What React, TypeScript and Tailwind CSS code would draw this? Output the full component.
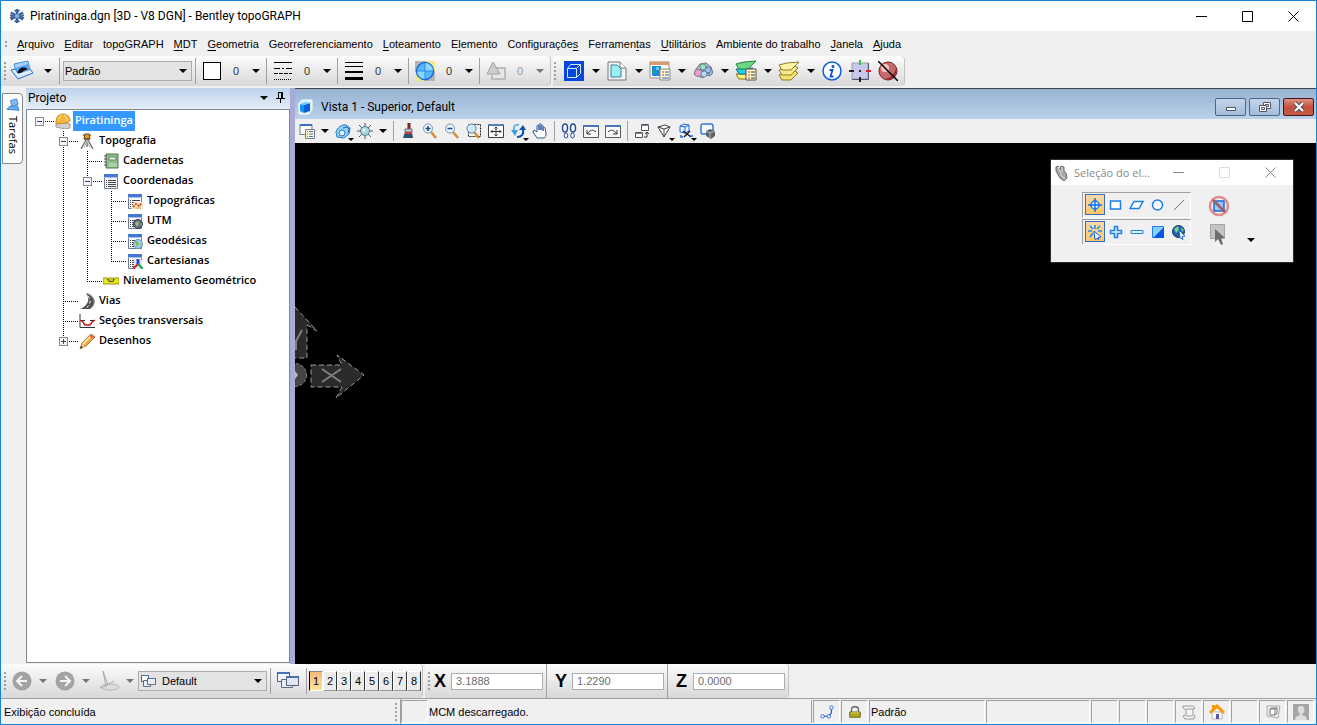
import { useState, type ReactNode } from 'react';

type IconProps = { children: ReactNode; box?: number; className?: string };

function Svg({ children, box = 16, className = 'h-4 w-4' }: IconProps) {
  return (
    <svg viewBox={`0 0 ${box} ${box}`} className={`shrink-0 ${className}`} fill="none" aria-hidden="true">
      {children}
    </svg>
  );
}

function Caret({ muted = false }: { muted?: boolean }) {
  return (
    <svg viewBox="0 0 8 4" className={muted ? 'h-1 w-2 shrink-0 text-[#777]' : 'h-1 w-2 shrink-0 text-black'} aria-hidden="true">
      <path d="M0 0h8L4 4z" fill="currentColor" />
    </svg>
  );
}

function Grip() {
  return (
    <svg viewBox="0 0 2 18" className="h-[18px] w-0.5 shrink-0" aria-hidden="true">
      <path d="M1 0v18" stroke="#a0a0a0" strokeWidth="2" strokeDasharray="2 2" />
    </svg>
  );
}

/* ---------- icons ---------- */

const Snowflake = () => (
  <Svg box={16} className="h-4 w-4">
    <g stroke="#3a649a" strokeWidth="2.500">
      <path d="M8 1v14M1.900 4.500l12.200 7M1.900 11.500l12.200-7" />
      <path d="M5.500 2L8 4.500 10.500 2M5.500 14L8 11.500l2.500 2.500M1 7l3.500 1L1 10M15 7l-3.500 1L15 10" strokeWidth="1.500" />
    </g>
    <circle cx="8" cy="8" r="2" fill="#8eb4dc" />
  </Svg>
);

const TaskTool = () => (
  <Svg box={24} className="h-6 w-6">
    <path d="M4 5l14-3 2 9-13 4z" fill="#a7d3fa" stroke="#4c8ed8" />
    <path d="M1 11l7 9 15-6-3-4-12 4-3-4z" fill="#dcecff" stroke="#2467dc" />
    <path d="M5 9l13-4 2 6-12 4z" fill="#5ba4f2" />
    <path d="M7 14c2-6 8-8 11-3-4-1-5 3-8 3z" fill="#111" />
  </Svg>
);

const LineStyle = () => (
  <Svg box={20} className="h-5 w-5">
    <path d="M1 1.500h18" stroke="#000" />
    <path d="M1 7.500h18" stroke="#000" strokeDasharray="6 2 2 2" />
    <path d="M1 12.500h18" stroke="#000" strokeDasharray="4 1" />
    <path d="M1 18.500h18" stroke="#000" strokeDasharray="1 1" />
  </Svg>
);

const LineWeight = () => (
  <Svg box={20} className="h-5 w-5">
    <path d="M1 1.500h18M1 5.500h18" stroke="#000" />
    <path d="M1 11h18" stroke="#000" strokeWidth="2" />
    <path d="M1 17.500h18" stroke="#000" strokeWidth="3" />
  </Svg>
);

const Transparency = () => (
  <Svg box={20} className="h-5 w-5">
    <path d="M0 0h20v20H0z" fill="#b6b6b6" />
    <path d="M11 0h9v10h-9zM0 11h9v9H0z" fill="#f4e88c" />
    <circle cx="10" cy="10" r="8.500" fill="#58b7fb" stroke="#1668d8" strokeWidth="1.500" />
    <path d="M10 2a8 8 0 0 1 8 8h-8zM10 18a8 8 0 0 1-8-8h8z" fill="#8bd5ff" />
    <path d="M10 2v16M2 10h16" stroke="#2f8de6" />
  </Svg>
);

const Priority = () => (
  <Svg box={20} className="h-5 w-5">
    <path d="M8 7h11v11H6v-4" fill="#e6e6e6" stroke="#b0b0b0" strokeWidth="1.500" />
    <path d="M7 1L1 13h13z" fill="#ccc" stroke="#a2a2a2" />
  </Svg>
);

const Models = () => (
  <Svg box={20} className="h-5 w-5">
    <path d="M0 0h20v20H0z" fill="#0546dc" />
    <path d="M3.500 7.500h9v9h-9zM3.500 7.500l3-4h10l-4 4M16.500 3.500v9l-4 4" stroke="#d7eaff" />
  </Svg>
);

const References = () => (
  <Svg box={20} className="h-5 w-5">
    <path d="M1 1h12l6 6v12H1z" fill="#f3f3fa" stroke="#777" />
    <path d="M4 4h6l4 4v8H4z" fill="#9af0f5" stroke="#3c7f94" />
    <path d="M13 1v6h6" fill="#fff" stroke="#777" />
  </Svg>
);

const Raster = () => (
  <Svg box={22} className="h-[22px] w-[22px]">
    <path d="M1 2h19v16H1z" fill="#fff" stroke="#9a8b80" />
    <path d="M1 2h19v3H1z" fill="#d79d70" />
    <path d="M3 6h9v10H3z" fill="#198bd6" />
    <path d="M4 10h3v3H4z" fill="#20a868" />
    <path d="M7 7h3v3H7z" fill="#63cdf3" />
    <path d="M11 9h10v11H11z" fill="#fffbc8" stroke="#888" />
    <path d="M13 12h2M13 15h2" stroke="#d12c2c" />
    <path d="M16 12h4M16 15h4M13 18h7" stroke="#2b5dd1" />
  </Svg>
);

const PointCloud = () => (
  <Svg box={20} className="h-5 w-5">
    <path d="M3 8l4-5 6-1 5 4 2 6-3 3-4-1-3 3-5-2-4-2z" fill="#a3bfd8" stroke="#6e7288" />
    <circle cx="5" cy="12" r="3.500" fill="#eca4cb" stroke="#9a6c92" />
    <circle cx="10" cy="6" r="3" fill="#a1e0c7" stroke="#66937f" />
    <circle cx="15" cy="9" r="3" fill="#9dc0ef" stroke="#5f7ba8" />
    <circle cx="11" cy="13" r="3" fill="#b5d9f2" stroke="#6b8ca6" />
    <path d="M7 8l4 2M13 5l2 2M14 12l3 1" stroke="#66718a" />
  </Svg>
);

const LevelManager = () => (
  <Svg box={22} className="h-[22px] w-[22px]">
    <path d="M1 14l3 5h9l5-5z" fill="#fff17c" stroke="#806f26" />
    <path d="M1 9l3 5h9l5-6z" fill="#1fd0ec" stroke="#216b7c" />
    <path d="M1 4l3 5h9l8-8-12 1z" fill="#69da84" stroke="#2d7c42" />
    <path d="M11 9h10v11H11z" fill="#fffbc8" stroke="#555" />
    <path d="M13 12h2M13 15h2M13 18h2" stroke="#d12c2c" />
    <path d="M16 12h4M16 15h4M16 18h4" stroke="#333" />
  </Svg>
);

const LevelDisplay = () => (
  <Svg box={22} className="h-[22px] w-[22px]">
    <path d="M1 15l3 5h9l7-7-3-2z" fill="#f6e173" stroke="#8d7a2d" />
    <path d="M1 10l3 5h9l7-7-3-2z" fill="#f8e987" stroke="#8d7a2d" />
    <path d="M1 5l3 5h9l8-8-12 1z" fill="#fdf3a8" stroke="#8d7a2d" />
  </Svg>
);

const Info = () => (
  <Svg box={20} className="h-5 w-5">
    <circle cx="10" cy="10" r="9" fill="#fff" stroke="#0d5fe0" strokeWidth="1.500" />
    <circle cx="11" cy="5.500" r="1.500" fill="#0b55d8" />
    <path d="M7.500 9h3l-2 6.500h3" stroke="#0b55d8" strokeWidth="1.800" />
  </Svg>
);

const AccuSnap = () => (
  <Svg box={22} className="h-[22px] w-[22px]">
    <path d="M3 3h16v16H3z" fill="#c8c8ec" stroke="#9b9bb5" />
    <path d="M3 19.500h16.500V3" stroke="#55556a" />
    <path d="M11 0v5" stroke="#22cf3a" strokeWidth="2" />
    <path d="M17 11h5" stroke="#e51f1f" strokeWidth="2" />
    <path d="M0 11h5M11 17v5M10 11h2" stroke="#222" strokeWidth="2" />
  </Svg>
);

const NoRedSphere = () => (
  <Svg box={20} className="h-5 w-5">
    <circle cx="10" cy="10" r="9" fill="#c4696c" stroke="#7c1d20" />
    <circle cx="7" cy="7" r="4" fill="#f0c2c2" />
    <path d="M18 7a9 9 0 0 1-11 11c6-1 10-5 11-11z" fill="#8d2024" />
    <path d="M0 0l20 20" stroke="#000" strokeWidth="1.500" />
  </Svg>
);

const Hat = () => (
  <Svg>
    <path d="M1 11l2-2 12 2v4l-5 1-9-2z" fill="#d0d0d0" stroke="#999" />
    <path d="M1 9c0-5 3-8 7-8s7 3 7 7l-4 2-10 1z" fill="#f2b53a" stroke="#c98e28" />
    <path d="M4 8c0-4 1-5 3-6M9 2c2 1 3 3 3 6" stroke="#ffe59b" />
  </Svg>
);

const Tripod = () => (
  <Svg>
    <path d="M6 1h4l1 5H5z" fill="#e59a2b" stroke="#764812" />
    <path d="M4 2h2M10 2h2M5 6h6" stroke="#55351a" />
    <path d="M7 7L2 16M8 7v7M9 7l5 9" stroke="#777" strokeWidth="1.500" />
    <path d="M8 7L5 15M8 7l3 8" stroke="#bbb" />
  </Svg>
);

const Notebook = () => (
  <Svg>
    <path d="M3 1h12v14H3z" fill="#8fbb8d" stroke="#4c7950" />
    <path d="M6 4h7v3H6z" fill="#e7f3e4" stroke="#608c62" />
    <path d="M1 3h3M1 6h3M1 9h3M1 12h3" stroke="#555" />
    <path d="M6 10h8v4H6z" fill="#a9d0a5" />
  </Svg>
);

function ListIcon({ children }: { children?: ReactNode }) {
  return (
    <Svg>
      <path d="M1.500 1.500h13v14h-13z" fill="#f5f7fb" stroke="#6f7c98" />
      <path d="M1 1h14v3H1z" fill="#4277d4" />
      <path d="M1 4.500h14" stroke="#a7c1ef" />
      <path d="M3 7.500h1M3 9.500h1M3 11.500h1M3 13.500h1M5 7.500h8M5 9.500h8M5 11.500h8M5 13.500h8" stroke="#444" />
      {children}
    </Svg>
  );
}

const Topographic = () => (
  <ListIcon>
    <path d="M7 9h8l1 7H4z" fill="#f7eac8" />
    <path d="M6 14l3-3 3 2 3-3" stroke="#d44a22" strokeWidth="2" strokeDasharray="2 1" />
    <path d="M8 15h6" stroke="#dca227" />
  </ListIcon>
);

const Utm = () => (
  <ListIcon>
    <circle cx="11" cy="11" r="4.500" fill="#587090" stroke="#32404f" />
    <path d="M8 10l3-2 1 3-2 3zM13 10l2 1-1 2z" fill="#a8b761" />
  </ListIcon>
);

const Geodesic = () => (
  <ListIcon>
    <circle cx="11" cy="11" r="4.500" fill="#9ed0f0" stroke="#6797b5" />
    <path d="M8 9l3-1 1 3-2 3zM13 10l2 2-1 2z" fill="#83bd4a" />
  </ListIcon>
);

const Cartesian = () => (
  <ListIcon>
    <path d="M7 7h8v9H7z" fill="#dce8fa" />
    <path d="M11 6v6" stroke="#1e42dd" strokeWidth="3" />
    <path d="M11 11l-5 5" stroke="#e32020" strokeWidth="2" />
    <path d="M11 11l5 5" stroke="#1da33a" strokeWidth="2" />
  </ListIcon>
);

const Level = () => (
  <Svg>
    <path d="M0 5h16v6H0z" fill="#ece51f" stroke="#9d9412" />
    <path d="M4 6h8l-2 3H6z" fill="#4e4b11" />
    <path d="M6 6h4v2H6z" fill="#b9d62f" />
  </Svg>
);

const Road = () => (
  <Svg>
    <path d="M7 0c9 2 12 11 4 16H1c7-3 11-9 6-16z" fill="#4c5055" />
    <path d="M7 0c9 3 11 11 4 16" stroke="#a7a7a7" />
    <path d="M9 3c3 4 3 9-2 12" stroke="#fff" strokeDasharray="3 2" />
  </Svg>
);

const CrossSection = () => (
  <Svg>
    <path d="M1 1v13.500h15M1 7.500h5M11 7.500h5" stroke="#333" />
    <path d="M1 7l3 2 2 3h5l2-3 3-2" stroke="#c21818" strokeWidth="1.500" />
  </Svg>
);

const Pencil = () => (
  <Svg>
    <path d="M1 16l2-6L12 1l4 3-9 9z" fill="#f2a63d" stroke="#b97a2c" />
    <path d="M4 11l9-9" stroke="#ffe09a" strokeWidth="2" />
    <path d="M12 1l4 3-2 2-4-3z" fill="#e46b54" />
    <path d="M1 16l2-5 3 3z" fill="#e9d2a9" />
    <path d="M1 16l1-3 2 1z" fill="#222" />
  </Svg>
);

const ViewCube = () => (
  <Svg>
    <path d="M2 4l3-3h10v10l-3 4H2z" fill="#d9edff" stroke="#f7fbff" />
    <path d="M3 5l4 1v8l-4-2z" fill="#1394ee" />
    <path d="M7 6l6-2v8l-6 2z" fill="#075fd4" />
    <path d="M3 5l5-2 5 1-6 2z" fill="#68cbff" />
  </Svg>
);

const Attributes = () => (
  <Svg>
    <path d="M1 1.500h12v10H1z" fill="#fff" stroke="#6d7888" />
    <path d="M1 1h12v2H1z" fill="#3c6ec3" />
    <path d="M6.500 6.500h9v9h-9z" fill="#fff7d2" stroke="#77818e" />
    <path d="M8 8.500h1M8 11h1M8 13.500h1" stroke="#d34b24" />
    <path d="M10 8.500h4M10 11h4M10 13.500h4" stroke="#4578d2" />
  </Svg>
);

const DisplayStyle = () => (
  <Svg>
    <path d="M1 9c1-4 6-8 10-7l4 3-1 6-5 4-7-1z" fill="#91d3f9" stroke="#2077c9" />
    <circle cx="7" cy="10" r="3" fill="#e9f8ff" stroke="#2077c9" />
    <path d="M8 5l4-1 2 2-1 4" stroke="#1b66b4" />
  </Svg>
);

const Brightness = () => (
  <Svg>
    <path d="M8 0v16M0 8h16M2 2l12 12M14 2L2 14" stroke="#4e5963" />
    <circle cx="8" cy="8" r="4.500" fill="#a6d9e2" stroke="#57808a" />
    <circle cx="7" cy="7" r="1.500" fill="#fff" />
  </Svg>
);

const Brush = () => (
  <Svg>
    <path d="M8 0h2v6H8z" fill="#a33030" stroke="#6b1f1f" />
    <path d="M5 6h7v3H5z" fill="#c9d2da" stroke="#66717c" />
    <path d="M5 9h7l1 6H3z" fill="#30506c" />
    <path d="M5 10h7" stroke="#cf3636" strokeWidth="2" />
  </Svg>
);

function Magnifier({ plus = false }: { plus?: boolean }) {
  return (
    <Svg>
      <path d="M9 9l5 6" stroke="#d88a35" strokeWidth="2.500" />
      <circle cx="6" cy="5.500" r="4.500" fill="#e8f6ff" stroke="#7794b5" />
      <path d={plus ? 'M3.500 5.500h5M6 3v5' : 'M3.500 5.500h5'} stroke="#17478a" strokeWidth="1.500" />
    </Svg>
  );
}

const WindowArea = () => (
  <Svg>
    <path d="M2.500 1.500h12v12h-12z" stroke="#222" strokeDasharray="2 1" />
    <path d="M8 9l5 6" stroke="#d88a35" strokeWidth="2.500" />
    <circle cx="5.500" cy="5.500" r="4.500" fill="#cfe9fb" stroke="#5a86ae" />
  </Svg>
);

const FitView = () => (
  <Svg>
    <path d="M.5 1.500h15v13H.5z" fill="#fff" stroke="#3c434e" />
    <path d="M0 2h16" stroke="#5b7eb2" strokeWidth="2" />
    <path d="M8 4v9M3 8.500h10M6.500 5.500L8 4l1.500 1.500M6.500 11.500L8 13l1.500-1.500M4.500 7L3 8.500 4.500 10M11.500 7L13 8.500 11.500 10" stroke="#333" />
  </Svg>
);

const RotateView = () => (
  <Svg>
    <path d="M9 2C5 1 3 4 4 8" stroke="#65b4ed" strokeWidth="2" />
    <path d="M1 7h7l-3 6z" fill="#3b9ce6" />
    <path d="M7 14c5 0 7-3 6-8" stroke="#0d50a8" strokeWidth="2" />
    <path d="M9 7l4-5 3 5z" fill="#0d50a8" />
  </Svg>
);

const Hand = () => (
  <Svg>
    <path d="M5 15L1 9l1-2 3 2V3c0-1 2-1 2 0v4-5c0-2 2-2 2 0v5-4c0-2 2-1 2 0v5-3c0-1 2-1 2 0l1 5c0 3-1 5-2 5z" fill="#fff" stroke="#2c549d" />
  </Svg>
);

const Walk = () => (
  <Svg>
    <ellipse cx="4" cy="5" rx="2.500" ry="4" fill="#f5faff" stroke="#264b98" strokeWidth="1.500" />
    <ellipse cx="5" cy="12.500" rx="1.800" ry="2.500" fill="#f5faff" stroke="#264b98" />
    <ellipse cx="12" cy="5" rx="2.500" ry="4" fill="#f5faff" stroke="#264b98" strokeWidth="1.500" />
    <ellipse cx="11.500" cy="12.500" rx="1.800" ry="2.500" fill="#f5faff" stroke="#264b98" />
  </Svg>
);

function ViewHistory({ next = false }: { next?: boolean }) {
  return (
    <Svg>
      <path d="M.5 2.500h15v12H.5z" fill="#f8f8f8" stroke="#555d68" />
      <path d="M0 3h16" stroke="#4c74bd" strokeWidth="2" />
      <path d={next ? 'M3 9c3-3 6-2 9 2M12 7v4H8' : 'M13 9C10 6 7 7 4 11M4 7v4h4'} stroke="#333" />
    </Svg>
  );
}

const CopyView = () => (
  <Svg>
    <path d="M7.500 1.500h7v6h-7zM1.500 9.500h7v5h-7z" fill="#fff" stroke="#555" />
    <path d="M8 2.500h7M2 10.500h7" stroke="#6e86a5" />
    <path d="M10 14h3V10M11 11l2-2 2 2" stroke="#333" />
  </Svg>
);

const Perspective = () => (
  <Svg>
    <path d="M2 4l7-2 5 2-6 10zM2 4l6 2 6-2M8 6v8" fill="#fff" stroke="#444" />
  </Svg>
);

const ClipVolume = () => (
  <Svg>
    <path d="M2 3l4-2 5 1v6l-4 2-5-1zM2 3l5 1 4-2M7 4v6" fill="#e6f1ff" stroke="#1b68db" />
    <path d="M5 8l8 6M12 8l-6 6" stroke="#222" strokeWidth="1.500" />
    <path d="M12 13h3M3 12v2h2" stroke="#1b68db" strokeWidth="1.500" />
  </Svg>
);

const ClipMask = () => (
  <Svg>
    <rect x="1" y="1" width="12" height="10" rx="2" fill="#f5f9ff" stroke="#3475dc" strokeWidth="1.500" />
    <path d="M6 8l4-2 5 2v5l-4 3-5-3z" fill="#5d6267" />
    <path d="M6 8l4 2 5-2M10 10v5" stroke="#b8bbbf" />
  </Svg>
);

const Glove = () => (
  <Svg>
    <path d="M2 2l2-1 2 4 1-4 3 1v4l2 2 1 5-3 3-4-3-4-7z" fill="#aaa" stroke="#696969" />
    <path d="M4 2l3 6M8 2v4M6 9l5 5" stroke="#e2e2e2" />
  </Svg>
);

const NewView = () => (
  <Svg>
    <path d="M1.500 2.500h7v6h-7z" fill="#fff" stroke="#555f72" />
    <path d="M3.500 7.500h7v6h-7z" fill="#eaedf6" stroke="#606a80" />
    <path d="M7.500 5.500h8v6h-8z" fill="#eaedf6" stroke="#606a80" />
    <path d="M1 2.500h8M7 5.500h9" stroke="#4970b5" />
  </Svg>
);

const ManageViews = () => (
  <Svg box={22} className="h-[22px] w-[22px]">
    <path d="M.5 2.500h12v9H.5z" fill="#f4f6fc" stroke="#555f72" />
    <path d="M4.500 9.500h11v8h-11z" fill="#eaedf6" stroke="#606a80" />
    <path d="M9.500 6.500h12v9h-12z" fill="#e3e6f6" stroke="#555f72" />
    <path d="M0 3h13M9 7h13" stroke="#4970b5" strokeWidth="2" />
  </Svg>
);

/* ---------- top bars ---------- */

const menus: [string, string, string][] = [
  ['', 'A', 'rquivo'],
  ['', 'E', 'ditar'],
  ['top', 'o', 'GRAPH'],
  ['', 'M', 'DT'],
  ['', 'G', 'eometria'],
  ['Geo', 'r', 'referenciamento'],
  ['', 'L', 'oteamento'],
  ['E', 'l', 'emento'],
  ['Configuraçõe', 's', ''],
  ['Ferramen', 't', 'as'],
  ['', 'U', 'tilitários'],
  ['Ambiente do ', 't', 'rabalho'],
  ['', 'J', 'anela'],
  ['', 'A', 'juda'],
];

function TitleBar() {
  return (
    <header className="flex h-[30px] shrink-0 items-center bg-white pl-2">
      <Snowflake />
      <h1 className="ml-[5px] flex-1 font-['Roboto',sans-serif] text-xs">Piratininga.dgn [3D - V8 DGN] - Bentley topoGRAPH</h1>
      <button aria-label="Minimizar" className="flex h-full w-[46px] items-center justify-center">
        <Svg box={11} className="h-[11px] w-[11px]"><path d="M0 5.500h11" stroke="#000" /></Svg>
      </button>
      <button aria-label="Maximizar" className="flex h-full w-[46px] items-center justify-center">
        <Svg box={11} className="h-[11px] w-[11px]"><path d="M.5.500h10v10H.5z" stroke="#000" /></Svg>
      </button>
      <button aria-label="Fechar" className="flex h-full w-[46px] items-center justify-center">
        <Svg box={11} className="h-[11px] w-[11px]"><path d="M.5.500l10 10M10.500.500l-10 10" stroke="#000" /></Svg>
      </button>
    </header>
  );
}

function MenuBar() {
  return (
    <nav className="flex h-[25px] shrink-0 items-center gap-2.5 pl-1">
      <svg viewBox="0 0 2 8" className="h-2 w-0.5" aria-hidden="true">
        <path d="M1 1v6" stroke="#a0a0a0" strokeWidth="2" strokeDasharray="2 2" />
      </svg>
      {menus.map(([before, key, after]) => (
        <button key={before + key + after} className="whitespace-pre">
          {before}<span className="underline underline-offset-2">{key}</span>{after}
        </button>
      ))}
    </nav>
  );
}

function Setting({ label, icon, muted = false }: { label: string; icon: ReactNode; muted?: boolean }) {
  return (
    <button aria-label={label} className="flex h-[26px] w-[71px] items-center border-l border-[#a0a0a0] pl-1">
      <span className="flex w-6 justify-center">{icon}</span>
      <span className={muted ? 'w-6 text-center text-[#999]' : 'w-6 text-center text-[#333]'}>0</span>
      <span className="flex w-4 justify-center"><Caret muted={muted} /></span>
    </button>
  );
}

function DropButton({ label, icon }: { label: string; icon: ReactNode }) {
  return (
    <button aria-label={label} className="flex h-6 w-[43px] items-center">
      <span className="flex w-6 justify-center">{icon}</span>
      <span className="flex w-[19px] justify-center"><Caret /></span>
    </button>
  );
}

const bar = 'flex items-center rounded-r-sm border-r border-[#c4c4c4] bg-linear-to-b from-[#fcfcfc] to-[#d8d8d8]';

function TopToolbar() {
  return (
    <div className="flex h-8 shrink-0 items-stretch gap-0.5 pb-0.5">
      <div className={bar + ' pl-[3px]'}>
        <Grip />
        <button aria-label="Tarefas" className="ml-1 flex w-[49px] items-center gap-2.5">
          <TaskTool />
          <Caret />
        </button>
        <div className="flex h-[26px] w-[136px] items-center border-l border-[#a0a0a0] pl-[3px]">
          <div className="relative w-[129px]">
            <select aria-label="Nível ativo" className="h-5 w-full appearance-none border border-[#adadad] bg-[#e3e3e3] pl-px">
              <option>Padrão</option>
            </select>
            <span className="pointer-events-none absolute top-2 right-[5px]"><Caret /></span>
          </div>
        </div>
        <Setting label="Cor" icon={<span className="block h-[18px] w-[18px] border border-black bg-white" />} />
        <Setting label="Estilo de linha" icon={<LineStyle />} />
        <Setting label="Peso" icon={<LineWeight />} />
        <Setting label="Transparência" icon={<Transparency />} />
        <Setting label="Prioridade" icon={<Priority />} muted />
      </div>
      <div className={bar + ' pr-1 pl-px'}>
        <Grip />
        <div className="ml-1.5 flex">
          <DropButton label="Modelos" icon={<Models />} />
          <DropButton label="Referências" icon={<References />} />
          <DropButton label="Raster" icon={<Raster />} />
          <DropButton label="Nuvem de pontos" icon={<PointCloud />} />
          <DropButton label="Gerenciador de níveis" icon={<LevelManager />} />
          <DropButton label="Exibição de níveis" icon={<LevelDisplay />} />
        </div>
        <div className="flex items-center gap-1">
          <button aria-label="Informações" className="flex w-6 justify-center"><Info /></button>
          <button aria-label="AccuSnap" className="flex w-6 justify-center"><AccuSnap /></button>
          <button aria-label="Desativar" className="flex w-6 justify-center"><NoRedSphere /></button>
        </div>
      </div>
    </div>
  );
}

/* ---------- project tree ---------- */

type Guide = ' ' | '|' | 'T' | 'L' | '-' | '+' | '0';

// one guide character per 24px column; '-' and '+' carry an expander box
const tree: { guides: Guide[]; label: string; icon: ReactNode }[] = [
  { guides: ['0'], label: 'Piratininga', icon: <Hat /> },
  { guides: [' ', '-'], label: 'Topografia', icon: <Tripod /> },
  { guides: [' ', '|', 'T'], label: 'Cadernetas', icon: <Notebook /> },
  { guides: [' ', '|', '-'], label: 'Coordenadas', icon: <ListIcon /> },
  { guides: [' ', '|', '|', 'T'], label: 'Topográficas', icon: <Topographic /> },
  { guides: [' ', '|', '|', 'T'], label: 'UTM', icon: <Utm /> },
  { guides: [' ', '|', '|', 'T'], label: 'Geodésicas', icon: <Geodesic /> },
  { guides: [' ', '|', '|', 'L'], label: 'Cartesianas', icon: <Cartesian /> },
  { guides: [' ', '|', 'L'], label: 'Nivelamento Geométrico', icon: <Level /> },
  { guides: [' ', 'T'], label: 'Vias', icon: <Road /> },
  { guides: [' ', 'T'], label: 'Seções transversais', icon: <CrossSection /> },
  { guides: [' ', '+'], label: 'Desenhos', icon: <Pencil /> },
];

function GuideCell({ kind }: { kind: Guide }) {
  const half = kind === 'L' || kind === '+';
  const box = kind === '-' || kind === '+' || kind === '0';
  return (
    <svg viewBox="0 0 24 20" className="h-5 w-6 shrink-0 overflow-visible" fill="none" aria-hidden="true">
      {kind !== ' ' && kind !== '0' && (
        <path d={half ? 'M12.500 0v10' : 'M12.500 0v20'} stroke="#000" strokeDasharray="1 1" />
      )}
      {kind !== ' ' && kind !== '|' && <path d="M12 10.500h15" stroke="#000" strokeDasharray="1 1" />}
      {box && <rect x="8.500" y="6.500" width="8" height="8" fill="#f6f6f6" stroke="#8a8a8a" />}
      {box && <path d={kind === '+' ? 'M10 10.500h5M12.500 8v5' : 'M10 10.500h5'} stroke="#33449a" />}
    </svg>
  );
}

function ProjectPanel() {
  const [selected, setSelected] = useState('Piratininga');
  return (
    <section className="flex w-[264px] shrink-0 flex-col pb-px">
      <div className="flex h-[21px] items-center bg-linear-to-b from-[#bdd2ea] to-[#e4eef8] pr-[5px] pb-0.5 pl-0.5">
        <h2 className="flex-1 font-['Roboto',sans-serif] text-xs">Projeto</h2>
        <button aria-label="Opções do painel" className="mr-2"><Caret /></button>
        <button aria-label="Fixar painel">
          <svg viewBox="0 0 9 11" className="h-[11px] w-[9px]" fill="none" aria-hidden="true">
            <path d="M2.500 0v6M2 .500h5M5.500 0v6M6.500 0v6M0 6.500h9M4.500 7v4" stroke="#000" />
          </svg>
        </button>
      </div>
      <ul className="flex-1 border border-[#828790] bg-white pt-px font-['Open_Sans',sans-serif] font-semibold">
        {tree.map((row) => (
          <li key={row.label} className="flex h-5 items-center">
            {row.guides.map((g, i) => <GuideCell key={i} kind={g} />)}
            <span className="relative flex w-[22px] justify-end pr-0.5">{row.icon}</span>
            <button
              onClick={() => setSelected(row.label)}
              className={row.label === selected ? 'h-5 bg-[#3399ff] px-0.5 pb-0.5 text-white' : 'h-5 px-0.5 pb-0.5'}
            >
              {row.label}
            </button>
          </li>
        ))}
      </ul>
    </section>
  );
}

/* ---------- view window ---------- */

function ToolButton({ label, children, more = false }: { label: string; children: ReactNode; more?: boolean }) {
  return (
    <button aria-label={label} className="relative flex h-6 w-[22px] items-center justify-center">
      {children}
      {more && (
        <svg viewBox="0 0 6 3" className="absolute right-0 bottom-0.5 h-[3px] w-1.5" aria-hidden="true">
          <path d="M0 0h6L3 3z" fill="#000" />
        </svg>
      )}
    </button>
  );
}

function ToolCaret({ label }: { label: string }) {
  return <button aria-label={label} className="flex h-6 w-[14px] items-center justify-center"><Caret /></button>;
}

const Divider = () => <span className="mx-[3px] h-5 w-px bg-[#a0a0a0]" />;

function ViewToolbar() {
  return (
    <div className="flex h-6 shrink-0 items-center bg-[#f0f0f0] pl-px">
      <ToolButton label="Atributos da vista"><Attributes /></ToolButton>
      <ToolCaret label="Mais atributos" />
      <ToolButton label="Estilo de exibição" more><DisplayStyle /></ToolButton>
      <ToolButton label="Brilho"><Brightness /></ToolButton>
      <ToolCaret label="Ajustar brilho" />
      <Divider />
      <ToolButton label="Atualizar vista"><Brush /></ToolButton>
      <ToolButton label="Aproximar"><Magnifier plus /></ToolButton>
      <ToolButton label="Afastar"><Magnifier /></ToolButton>
      <ToolButton label="Janela de área"><WindowArea /></ToolButton>
      <ToolButton label="Ajustar vista"><FitView /></ToolButton>
      <ToolButton label="Girar vista" more><RotateView /></ToolButton>
      <ToolButton label="Mover vista"><Hand /></ToolButton>
      <Divider />
      <ToolButton label="Caminhar"><Walk /></ToolButton>
      <ToolButton label="Vista anterior"><ViewHistory /></ToolButton>
      <ToolButton label="Próxima vista"><ViewHistory next /></ToolButton>
      <Divider />
      <ToolButton label="Copiar vista"><CopyView /></ToolButton>
      <ToolButton label="Perspectiva" more><Perspective /></ToolButton>
      <ToolButton label="Volume de corte" more><ClipVolume /></ToolButton>
      <ToolButton label="Máscara de corte"><ClipMask /></ToolButton>
    </div>
  );
}

const mdiButton = 'flex h-[18px] w-[31px] items-center justify-center rounded-xs border';

function ViewTitle() {
  return (
    <div className="flex h-[31px] shrink-0 items-center border-t border-[#444] bg-linear-to-b from-[#98b3d2] to-[#b9d1ea] pt-1.5 pr-0.5 pl-0.5">
      <ViewCube />
      <h2 className="ml-2 flex-1 font-['Roboto',sans-serif] text-xs">Vista 1 - Superior, Default</h2>
      <div className="flex gap-[3px]">
        <button aria-label="Minimizar vista" className={mdiButton + ' border-[#4f6582] bg-linear-to-b from-[#c3d5ea] to-[#a3bcd9]'}>
          <Svg box={12} className="h-3 w-3"><path d="M1.500 6.500h9v3h-9z" fill="#fff" stroke="#535666" /></Svg>
        </button>
        <button aria-label="Restaurar vista" className={mdiButton + ' border-[#4f6582] bg-linear-to-b from-[#c3d5ea] to-[#a3bcd9]'}>
          <Svg box={12} className="h-3 w-3">
            <path d="M4.500 1.500h7v6h-7zM6.500 3.500h3v2h-3z" fill="#fff" stroke="#535666" />
            <path d="M.5 4.500h7v6h-7zM2.500 6.500h3v2h-3z" fill="#fff" stroke="#535666" />
          </Svg>
        </button>
        <button aria-label="Fechar vista" className={mdiButton + ' border-[#43141a] bg-linear-to-b from-[#dc9384] via-[#c44e3c] to-[#c65b45]'}>
          <Svg box={12} className="h-3 w-3">
            <path d="M2 2l8 8M10 2l-8 8" stroke="#535666" strokeWidth="4" />
            <path d="M2 2l8 8M10 2l-8 8" stroke="#fff" strokeWidth="2" />
          </Svg>
        </button>
      </div>
    </div>
  );
}

function AxisTriad() {
  return (
    <svg viewBox="0 0 70 93" className="absolute top-[162px] left-0 h-[93px] w-[70px]" fill="none" aria-hidden="true">
      <g fill="#2b2b2b" stroke="#999" strokeDasharray="5 3">
        <path d="M0 2l22 24-10-6v33H-6V2z" />
        <path d="M16 60h31l-5-10 27 20-28 23 6-11H16z" />
      </g>
      <circle cx="0" cy="70" r="11.500" fill="#444" stroke="#888" strokeDasharray="3 2" />
      <path d="M0 66l3 4-3 4z" fill="#bbb" />
      <path d="M27 64l19 13M46 64L27 77" stroke="#808080" strokeWidth="2" />
      <path d="M7 25L1 36v9" stroke="#808080" strokeWidth="2" />
    </svg>
  );
}

/* ---------- element selection dialog ---------- */

const methods = [
  { label: 'Individual', icon: <><circle cx="8" cy="8" r="4" fill="#dff2ff" stroke="#1673e8" strokeWidth="1.500" /><path d="M8 1v14M1 8h14" stroke="#1673e8" strokeWidth="1.500" /></> },
  { label: 'Bloco', icon: <path d="M2.500 4h10v8h-10z" fill="#fff" stroke="#1a80ed" strokeWidth="1.500" /> },
  { label: 'Forma', icon: <path d="M5 4.500h9L10 11.500H1z" fill="#fff" stroke="#1a80ed" strokeWidth="1.500" /> },
  { label: 'Círculo', icon: <circle cx="7.500" cy="8" r="5" fill="#fff" stroke="#1a80ed" strokeWidth="1.500" /> },
  { label: 'Linha', icon: <path d="M3 13L13 3" stroke="#777" /> },
];

const modes = [
  { label: 'Novo', icon: <><path d="M8 1v4M1 7h4M3 2l3 3M13 2l-3 3M11 7h4M3 13l3-4" stroke="#1a8df0" strokeWidth="1.500" /><path d="M7 7l7 6-3 .5 1 2-2-1-2 1z" fill="#fff" stroke="#1762d6" /></> },
  { label: 'Adicionar', icon: <path d="M6.500 2.500h3v4h4v3h-4v4h-3v-4h-4v-3h4z" fill="#dff2ff" stroke="#1a80ed" strokeWidth="1.500" /> },
  { label: 'Subtrair', icon: <path d="M2 6.500h12v3H2z" fill="#dff2ff" stroke="#1a80ed" /> },
  { label: 'Inverter', icon: <><path d="M2.500 2.500h11v11h-11z" fill="#8ad0ff" stroke="#1a80ed" /><path d="M14 3v11H3z" fill="#0856e8" /></> },
  { label: 'Todos', icon: <><circle cx="7.500" cy="7.500" r="6" fill="#1c63b4" stroke="#12385f" /><path d="M3 5l4-3 1 4-3 3zM10 3l3 3-2 2z" fill="#7fce8c" /><path d="M8 6l6 6-3 .5 1 3-3-2z" fill="#fff" stroke="#1762d6" /></> },
];

function Choices({ items }: { items: { label: string; icon: ReactNode }[] }) {
  const [active, setActive] = useState(items[0].label);
  return (
    <div className="flex w-[109px] gap-px border border-t-[#a0a0a0] border-r-white border-b-white border-l-[#a0a0a0] pt-px pb-0.5 pl-0.5">
      {items.map((item) => (
        <button
          key={item.label}
          aria-label={item.label}
          onClick={() => setActive(item.label)}
          className={item.label === active
            ? 'flex h-[21px] w-5 items-center justify-center border border-[#3b6bbf] bg-linear-to-b from-[#fad9a8] to-[#fcc765]'
            : 'flex h-[21px] w-5 items-center justify-center'}
        >
          <Svg>{item.icon}</Svg>
        </button>
      ))}
    </div>
  );
}

function SelectionDialog() {
  return (
    <section className="absolute top-4 right-[22px] h-[104px] w-[244px] border border-[#2a2a2a] bg-[#f0f0f0]">
      <div className="flex h-[25px] items-center bg-white pl-[3px] text-[#888]">
        <Glove />
        <h2 className="ml-1 w-[82px] font-['Open_Sans',sans-serif] whitespace-nowrap">Seleção do el...</h2>
        <button aria-label="Minimizar diálogo" className="flex flex-1 justify-center">
          <Svg box={11} className="h-[11px] w-[11px]"><path d="M0 5.500h11" stroke="#888" /></Svg>
        </button>
        <button aria-label="Maximizar diálogo" disabled className="flex flex-1 justify-center">
          <Svg box={11} className="h-[11px] w-[11px]"><path d="M.5.500h10v10H.5z" stroke="#ddd" /></Svg>
        </button>
        <button aria-label="Fechar diálogo" className="flex flex-1 justify-center">
          <Svg box={11} className="h-[11px] w-[11px]"><path d="M.5.500l10 10M10.500.500l-10 10" stroke="#888" /></Svg>
        </button>
      </div>
      <div className="flex gap-[17px] pt-[7px] pl-[31px]">
        <div className="flex flex-col gap-px">
          <Choices items={methods} />
          <Choices items={modes} />
        </div>
        <div className="flex flex-col gap-1.5 pt-[3px]">
          <button aria-label="Desabilitar controles">
            <Svg box={22} className="h-[22px] w-[22px]">
              <path d="M6 6h10v10H6z" fill="#9fc7f5" stroke="#1667d8" strokeWidth="1.500" />
              <circle cx="11" cy="11" r="9" stroke="#e08a8d" strokeWidth="2.500" />
              <path d="M5 5l12 12" stroke="#96606c" strokeWidth="2.500" />
            </Svg>
          </button>
          <button aria-label="Seleção por atributo">
            <Svg box={22} className="h-[22px] w-[22px]">
              <path d="M2.500 1.500h14v14h-14z" fill="#c4c4c4" stroke="#a5a5a5" />
              <path d="M7 6l10 9h-4l2 6-2 1-3-6-3 3z" fill="#6e6e6e" />
            </Svg>
          </button>
        </div>
        <button aria-label="Mostrar mais" className="pt-[42px]"><Caret /></button>
      </div>
    </section>
  );
}

/* ---------- bottom bars ---------- */

function NavArrow({ label, path }: { label: string; path: string }) {
  return (
    <button aria-label={label} className="flex w-[43px] items-center gap-[7px]">
      <Svg box={20} className="h-5 w-5">
        <circle cx="10" cy="10" r="9.500" fill="#a3a3a3" />
        <path d={path} stroke="#f4f4f4" strokeWidth="2" />
      </Svg>
      <Caret muted />
    </button>
  );
}

function Coordinate({ axis, value, first = false }: { axis: string; value: string; first?: boolean }) {
  return (
    <label className={first ? 'flex h-full items-center pr-[3px]' : 'flex h-full items-center border-l border-[#a0a0a0] pr-[3px] pl-2'}>
      <span className="w-[17px] text-lg leading-5 font-bold">{axis}</span>
      <input defaultValue={value} className="h-[17px] w-[92px] border border-[#abadb3] bg-white pl-1 text-[#6d6d6d] outline-none" />
    </label>
  );
}

function BottomToolbar() {
  const [view, setView] = useState(1);
  return (
    <div className="flex h-[34px] shrink-0 gap-0.5">
      <div className={bar + ' pr-px pl-[3px]'}>
        <Grip />
        <div className="ml-1.5 flex items-center">
          <NavArrow label="Voltar" path="M15 10H6M10 5l-5 5 5 5" />
          <NavArrow label="Avançar" path="M5 10h9M10 5l5 5-5 5" />
          <button aria-label="Modelo anterior" className="flex w-10 items-center gap-1.5">
            <Svg box={22} className="h-[22px] w-[22px]">
              <ellipse cx="12" cy="17" rx="9" ry="3" fill="#ddd" stroke="#b5b5b5" />
              <path d="M5 1l3 15 8-5M8 16l-6 2M5 1l5 14" stroke="#aaa" />
            </Svg>
            <Caret muted />
          </button>
        </div>
        <div className="relative w-[129px]">
          <select aria-label="Grupo de vistas" className="h-5 w-full appearance-none border border-[#adadad] bg-[#e3e3e3] pl-[23px]">
            <option>Default</option>
          </select>
          <span className="pointer-events-none absolute top-0.5 left-0.5"><NewView /></span>
          <span className="pointer-events-none absolute top-2 right-[5px]"><Caret /></span>
        </div>
        <span className="mx-[3px] h-[26px] w-px bg-[#a0a0a0]" />
        <button aria-label="Gerenciar vistas" className="mx-[3px]"><ManageViews /></button>
        <span className="mr-0.5 ml-1 h-[26px] w-px bg-[#a0a0a0]" />
        <div className="flex">
          {[1, 2, 3, 4, 5, 6, 7, 8].map((n) => (
            <button
              key={n}
              onClick={() => setView(n)}
              className={n === view
                ? 'h-5 w-[14px] border border-t-[#888] border-r-white border-b-white border-l-black bg-linear-to-b from-[#f8b878] to-[#fee39a]'
                : 'h-5 w-[14px] border border-t-white border-r-[#333] border-b-[#999] border-l-white bg-[#ececec]'}
            >
              {n}
            </button>
          ))}
        </div>
      </div>
      <div className={bar + ' pl-[3px]'}>
        <Grip />
        <div className="ml-1 flex h-full items-center">
          <Coordinate axis="X" value="3.1888" first />
          <Coordinate axis="Y" value="1.2290" />
          <Coordinate axis="Z" value="0.0000" />
        </div>
      </div>
    </div>
  );
}

function Cell({ children, wide = '' }: { children?: ReactNode; wide?: string }) {
  return (
    <div className={'flex h-[23px] items-center border border-t-[#a0a0a0] border-r-white border-b-white border-l-[#a0a0a0] ' + (wide || 'w-[27px] justify-center')}>
      {children}
    </div>
  );
}

function StatusBar() {
  return (
    <footer className="flex h-[26px] shrink-0 items-center border-t border-[#a0a0a0] pr-0.5">
      <span className="w-[394px] pl-[3px]">Exibição concluída</span>
      <Grip />
      <span className="ml-[3px] h-full w-px bg-[#a0a0a0]" />
      <Cell />
      <span className="flex-1 pl-px">MCM descarregado.</span>
      <div className="flex gap-px border-l border-[#a0a0a0] pl-px">
        <Cell>
          <Svg className="h-3.5 w-3.5">
            <path d="M2 13h8l3-4V4" stroke="#2d68d8" strokeWidth="1.500" />
            <circle cx="3" cy="13" r="2" fill="#e8f2ff" stroke="#2d68d8" />
            <circle cx="10" cy="13" r="2" fill="#e8f2ff" stroke="#2d68d8" />
            <circle cx="13" cy="3" r="2" fill="#e8f2ff" stroke="#2d68d8" />
          </Svg>
        </Cell>
        <Cell>
          <Svg className="h-3.5 w-3.5">
            <path d="M4 8V5c0-4 8-4 8 0v3" stroke="#666" strokeWidth="1.500" />
            <path d="M2 8h12v6H2z" fill="#b0a51c" stroke="#615c16" />
            <path d="M3 9h10" stroke="#e4dc65" />
          </Svg>
        </Cell>
        <Cell wide="w-[116px] pl-px">Padrão</Cell>
        <Cell wide="w-[104px]" />
        <Cell />
        <Cell />
        <Cell />
        <Cell>
          <Svg>
            <path d="M2 2h10l2 2-2 1v6l2 1-1 3H4l-2-3 3-1V6L2 4z" fill="#f4f4f4" stroke="#999" />
            <path d="M5 5h7M5 12h7" stroke="#999" />
          </Svg>
        </Cell>
        <Cell>
          <Svg>
            <path d="M3 8h10v7H3z" fill="#fafafa" stroke="#bbb" />
            <path d="M7 10h3v5H7z" fill="#5959a8" />
            <path d="M1 9l7-7 7 7" stroke="#f59b0a" strokeWidth="3" />
            <path d="M3 1h3v4H3z" fill="#f59b0a" />
          </Svg>
        </Cell>
        <Cell />
        <Cell>
          <Svg>
            <path d="M2 2h13l-2 12-11-2z" fill="#ededed" stroke="#aaa" />
            <path d="M5 5l2-1h5v5l-2 2H5zM5 5h5v6M10 5l2-1" fill="#fff" stroke="#777" />
          </Svg>
        </Cell>
        <Cell>
          <Svg>
            <path d="M0 0h16v16H0z" fill="#a6a6a6" />
            <path d="M8 2c-5 0-3 7-1 8v1c-3 1-5 2-5 5h12c0-3-2-4-5-5v-1c3-1 4-8-1-8z" fill="#ddd" />
          </Svg>
        </Cell>
      </div>
    </footer>
  );
}

export default function App() {
  return (
    <div className="flex h-screen flex-col overflow-hidden border border-[#1883d7] bg-[#f0f0f0] font-['Liberation_Sans',Arial,sans-serif] text-[11px] leading-4 text-black">
      <TitleBar />
      <MenuBar />
      <TopToolbar />
      <main className="flex min-h-0 flex-1">
        <aside className="w-[25px] shrink-0 pt-[5px] pl-px">
          <button className="flex h-[71px] w-[21px] flex-col items-center gap-1 rounded-r-sm border border-[#888] bg-white pt-1">
            <Svg className="h-3.5 w-3.5">
              <path d="M1 13l4-4h8l2 5z" fill="#6eb2f3" stroke="#2c70c5" />
              <path d="M5 3l7-2 2 6-7 3z" fill="#83b9f0" stroke="#3d7fd0" />
            </Svg>
            <span className="font-['Open_Sans',sans-serif] [writing-mode:vertical-rl]">Tarefas</span>
          </button>
        </aside>
        <ProjectPanel />
        <div className="w-[5px] shrink-0 bg-[#aaaad8]" />
        <section className="flex min-w-0 flex-1 flex-col">
          <ViewTitle />
          <ViewToolbar />
          <div className="relative flex-1 overflow-hidden bg-black">
            <AxisTriad />
            <SelectionDialog />
          </div>
        </section>
      </main>
      <BottomToolbar />
      <StatusBar />
    </div>
  );
}
